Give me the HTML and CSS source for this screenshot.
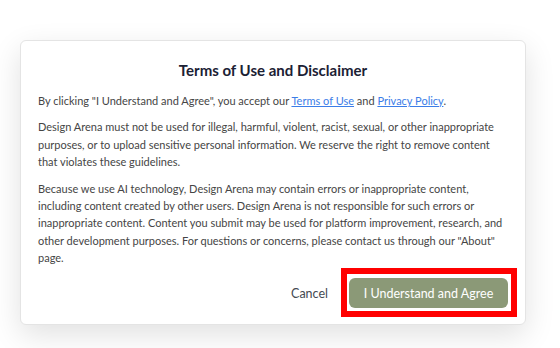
FILE: index.html
```html
<!DOCTYPE html>
<html lang="en">
<head>
<meta charset="utf-8">
<title>Terms of Use and Disclaimer</title>
<link rel="stylesheet" href="styles.css">
</head>
<body>
<div class="page">
  <div class="modal">
    <h2 class="title">Terms of Use and Disclaimer</h2>
    <p class="text">By clicking "I Understand and Agree", you accept our <a class="link" href="#">Terms of Use</a> and <a class="link" href="#">Privacy Policy</a>.</p>
    <p class="text">Design Arena must not be used for illegal, harmful, violent, racist, sexual, or other inappropriate purposes, or to upload sensitive personal information. We reserve the right to remove content that violates these guidelines.</p>
    <p class="text">Because we use AI technology, Design Arena may contain errors or inappropriate content, including content created by other users. Design Arena is not responsible for such errors or inappropriate content. Content you submit may be used for platform improvement, research, and other development purposes. For questions or concerns, please contact us through our "About" page.</p>
    <div class="actions">
      <button class="btn-cancel" type="button">Cancel</button>
      <div class="highlight">
        <button class="btn-agree" type="button">I Understand and Agree</button>
      </div>
    </div>
  </div>
</div>
</body>
</html>
```

FILE: styles.css
```css
html, body {
  margin: 0;
  padding: 0;
  background: #ffffff;
}
body {
  font-family: "Lato", "Open Sans", sans-serif;
  width: 560px;
  height: 348px;
  overflow: hidden;
}
.page {
  padding: 40px 0 0 20px;
}
.modal {
  width: 506px;
  height: 285px;
  box-sizing: border-box;
  background: #ffffff;
  border: 1px solid #e4e4e4;
  border-radius: 6px;
  box-shadow: 0 10px 30px rgba(0, 0, 0, 0.12);
  padding: 18px 17px 16px;
  display: flex;
  flex-direction: column;
}
.title {
  margin: 0 0 11px;
  text-align: center;
  font-family: "Lato", sans-serif;
  font-weight: 700;
  font-size: 15px;
  line-height: 22px;
  color: #1b2134;
}
.text {
  margin: 0 0 9px;
  font-size: 11px;
  line-height: 17.4px;
  color: #454545;
}
.link {
  color: #3b7de8;
  text-decoration: underline;
}
.actions {
  margin-top: auto;
  display: flex;
  justify-content: flex-end;
  align-items: center;
  gap: 9px;
}
.btn-cancel {
  background: none;
  border: none;
  font-family: inherit;
  font-size: 12.5px;
  color: #444a52;
  padding: 0 12px;
  height: 30px;
}
.highlight {
  position: relative;
}
.highlight::after {
  content: "";
  position: absolute;
  top: -10px;
  left: -8px;
  right: -9px;
  bottom: -9px;
  border: 6px solid #ff0000;
  pointer-events: none;
}
.btn-agree {
  display: block;
  width: 159px;
  height: 30px;
  border: none;
  border-radius: 6px;
  background: #8b9977;
  color: #ffffff;
  font-family: inherit;
  font-size: 12.5px;
  padding: 0;
}
```
